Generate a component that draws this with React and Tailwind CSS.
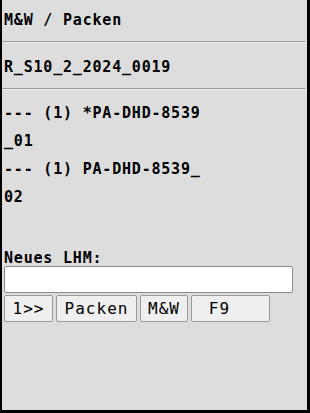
import React from 'react';

const mono = { fontFamily: '"DejaVu Sans Mono", "Liberation Mono", monospace' };

const items = ['--- (1) *PA-DHD-8539_01', '--- (1) PA-DHD-8539_02'];

const buttons = [
  { label: '1>>', w: 'w-[49px]' },
  { label: 'Packen', w: 'w-[81px]' },
  { label: 'M&W', w: 'w-[48px] tracking-[0px]' },
  { label: 'F9', w: 'w-[79px] pr-[22px] font-medium' },
];

export default function App() {
  return (
    <div
      className="h-[413px] w-[310px] bg-[#dddddd] border-l-2 border-r-[3px] border-b-[3px] border-black text-black overflow-hidden"
      style={mono}
    >
      {/* header */}
      <div className="pl-[2px] pt-[10px] text-[15px] leading-[20px] font-bold tracking-[0.8px]">M&amp;W / Packen</div>
      <div className="mt-[11px] mr-[2px] h-[2px] border-t border-b border-t-[#9c9c9c] border-b-[#ececec]" />

      <div className="pl-[2px] mt-[14px] text-[15px] leading-[20px] font-bold tracking-[0.8px]">R_S10_2_2024_0019</div>
      <div className="mt-[11px] mr-[2px] h-[2px] border-t border-b border-t-[#9c9c9c] border-b-[#ececec]" />

      {/* LHM list */}
      <div className="pl-[2px] mt-[9px] w-[204px] text-[15px] leading-[28px] font-bold tracking-[0.8px] break-all">
        {items.map((it) => (
          <div key={it}>{it}</div>
        ))}
      </div>

      {/* new LHM */}
      <div className="pl-[2px] mt-[39px] text-[15px] leading-[16px] font-bold tracking-[0.8px]">Neues LHM:</div>
      <div className="pl-[2px]">
        <input
          type="text"
          className="block w-[289px] h-[27px] bg-white border border-[#8a8a8a] rounded-[2px] outline-none px-1"
        />
        <div className="flex gap-[3px] mt-[2px]">
          {buttons.map((b) => (
            <button
              key={b.label}
              className={`${b.w} h-[27px] bg-[#efefef] border border-[#9a9a9a] rounded-[2px] text-[16px] tracking-[1px] text-black flex items-center justify-center`}
              style={mono}
            >
              {b.label}
            </button>
          ))}
        </div>
      </div>
    </div>
  );
}
